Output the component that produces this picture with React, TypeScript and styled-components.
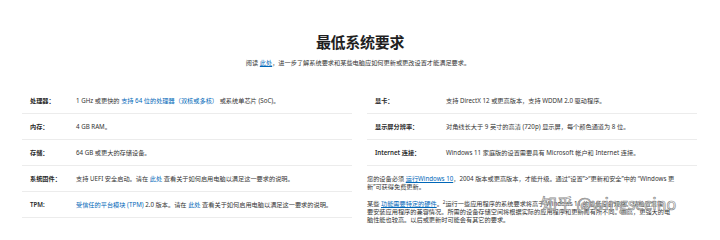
import styled, { createGlobalStyle } from "styled-components";

const GlobalStyle = createGlobalStyle`
  html, body {
    margin: 0;
    padding: 0;
    background: #ffffff;
  }
  body {
    font-family: "Noto Sans", "Noto Sans CJK SC", sans-serif;
    color: #2b2b2b;
  }
`;

const Page = styled.div`
  position: relative;
  width: 720px;
  height: 240px;
  overflow: hidden;
  padding-top: 33px;
  box-sizing: border-box;
`;

const Title = styled.h2`
  margin: 0;
  text-align: center;
  font-family: "Noto Sans CJK SC", sans-serif;
  font-size: 15px;
  line-height: 18px;
  font-weight: 600;
  color: #1f1f1f;
  letter-spacing: -0.3px;
`;

const Intro = styled.p`
  margin: 8px 0 0;
  text-align: center;
  font-size: 6.2px;
  line-height: 8px;
  color: #333333;
  padding-right: 4px;
`;

const Link = styled.a<{ $underline?: boolean }>`
  color: #0067b8;
  text-decoration: ${(p) => (p.$underline ? "underline" : "none")};
  text-underline-offset: 1px;
`;

const Columns = styled.div`
  display: grid;
  grid-template-columns: 330px 330px;
  column-gap: 15px;
  padding: 0 0 0 22px;
  margin-top: 21px;
`;

const Column = styled.div`
  display: flex;
  flex-direction: column;
`;

const Row = styled.div<{ $labelWidth: number }>`
  display: grid;
  grid-template-columns: ${(p) => p.$labelWidth}px 1fr;
  align-items: center;
  height: 26px;
  box-sizing: border-box;
  padding: 0 8px;
  border-bottom: 1px solid #ececec;
  font-size: 6.2px;
  line-height: 8px;
`;

const Label = styled.span`
  font-weight: 600;
  color: #2a2a2a;
`;

const Value = styled.span`
  color: #333333;
  white-space: nowrap;
`;

const Note = styled.div`
  margin-top: 9px;
  font-size: 6.2px;
  line-height: 8px;
  color: #333333;
`;

const NoteLine = styled.div`
  white-space: nowrap;
`;

const Sup = styled.sup`
  font-size: 4.5px;
  line-height: 0;
  vertical-align: 2px;
`;

const Watermark = styled.div`
  position: absolute;
  left: 541px;
  top: 193px;
  font-family: "Noto Sans CJK SC", sans-serif;
  font-size: 16px;
  line-height: 20px;
  color: rgba(255, 255, 255, 0.6);
  -webkit-text-stroke: 0.7px #8c8c8c;
  white-space: nowrap;
  pointer-events: none;
`;

const leftRows = [
  {
    label: "处理器：",
    value: (
      <>
        1 GHz 或更快的 <Link>支持 64 位的处理器（双核或多核）</Link> 或系统单芯片 (SoC)。
      </>
    ),
  },
  { label: "内存：", value: <>4 GB RAM。</> },
  { label: "存储：", value: <>64 GB 或更大的存储设备。</> },
  {
    label: "系统固件：",
    value: (
      <>
        支持 UEFI 安全启动。请在 <Link>此处</Link> 查看关于如何启用电脑以满足这一要求的说明。
      </>
    ),
  },
  {
    label: "TPM:",
    value: (
      <>
        <Link>受信任的平台模块 (TPM)</Link> 2.0 版本。请在 <Link>此处</Link> 查看关于如何启用电脑以满足这一要求的说明。
      </>
    ),
  },
];

const rightRows = [
  { label: "显卡：", value: <>支持 DirectX 12 或更高版本，支持 WDDM 2.0 驱动程序。</> },
  { label: "显示屏分辨率：", value: <>对角线长大于 9 英寸的高清 (720p) 显示屏，每个颜色通道为 8 位。</> },
  { label: "Internet 连接：", value: <>Windows 11 家庭版的设置需要具有 Microsoft 帐户和 Internet 连接。</> },
];

export default function App() {
  return (
    <>
      <GlobalStyle />
      <Page>
        <Title>最低系统要求</Title>
        <Intro>
          阅读 <Link $underline>此处</Link>，进一步了解系统要求和某些电脑应如何更新或更改设置才能满足要求。
        </Intro>
        <Columns>
          <Column>
            {leftRows.map((r) => (
              <Row key={r.label} $labelWidth={46}>
                <Label>{r.label}</Label>
                <Value>{r.value}</Value>
              </Row>
            ))}
          </Column>
          <Column>
            {rightRows.map((r) => (
              <Row key={r.label} $labelWidth={71}>
                <Label>{r.label}</Label>
                <Value>{r.value}</Value>
              </Row>
            ))}
            <Note>
              <NoteLine>
                您的设备必须 <Link $underline>运行Windows 10</Link>，2004 版本或更高版本，才能升级。通过“设置”&gt;“更新和安全”中的 “Windows 更
              </NoteLine>
              <NoteLine>新”可获得免费更新。</NoteLine>
            </Note>
            <Note>
              <NoteLine>
                某些 <Link $underline>功能需要特定的硬件</Link>。<Sup>2</Sup>运行一些应用程序的系统要求将高于 Windows 11 的最低设备规格。请检查您需
              </NoteLine>
              <NoteLine>要安装应用程序的兼容情况。所需的设备存储空间将根据实际的应用程序和更新而有所不同。更高，更强大的电</NoteLine>
              <NoteLine>脑性能也较高。以后或更新时可能会有其它的要求。</NoteLine>
            </Note>
          </Column>
        </Columns>
        <Watermark>知乎 @wingsecino</Watermark>
      </Page>
    </>
  );
}
